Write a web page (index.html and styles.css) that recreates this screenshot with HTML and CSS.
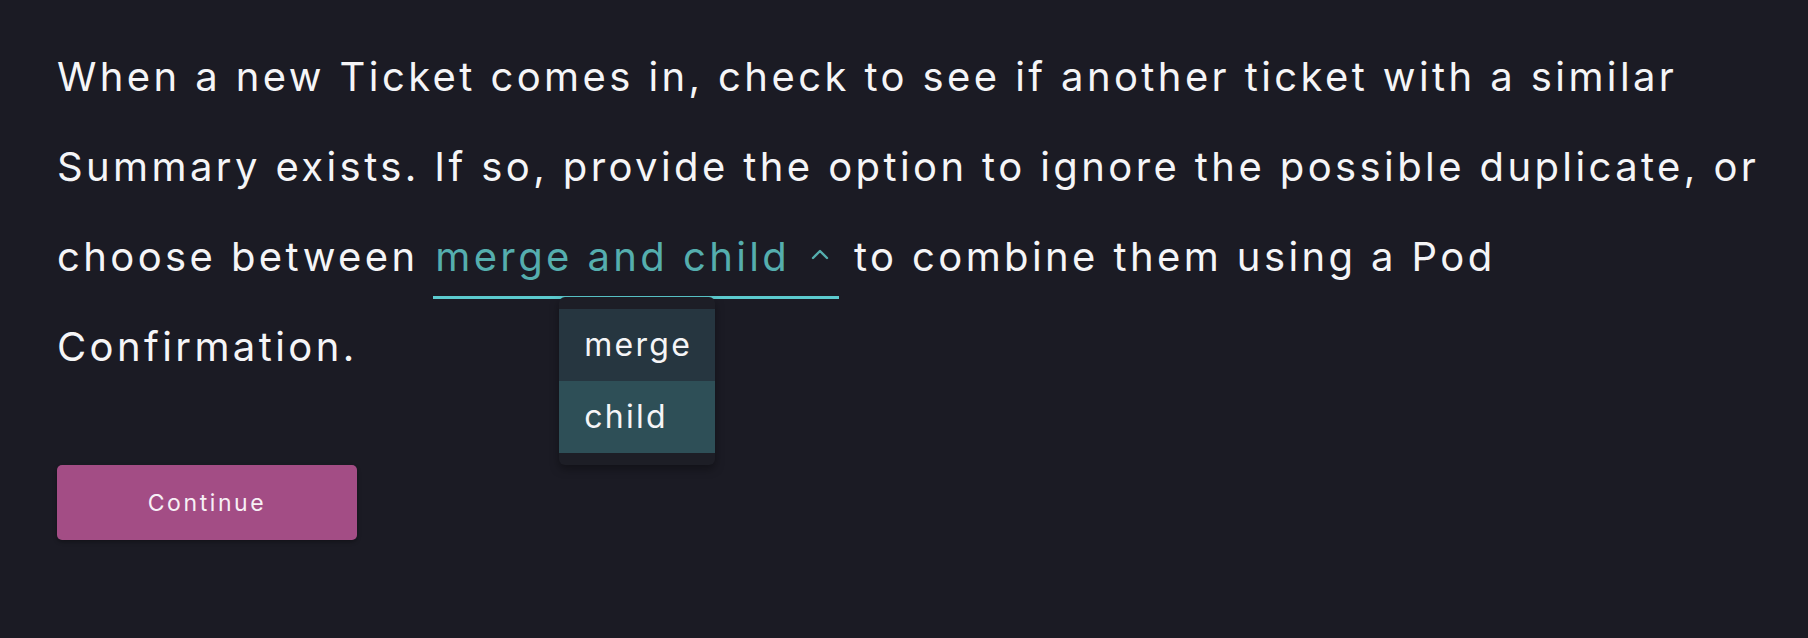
FILE: index.html
```html
<!DOCTYPE html>
<html lang="en">
<head>
<meta charset="utf-8">
<title>Duplicate ticket prompt</title>
<link rel="stylesheet" href="styles.css">
</head>
<body>
<main class="page">
  <p class="prompt">When a new Ticket comes in, check to see if another ticket with a similar Summary exists. If so, provide the option to ignore the possible duplicate, or choose between <span class="select"><span class="select-value">merge and child</span><svg class="caret" width="18" height="11" viewBox="0 0 18 11"><path d="M2 9 L9 2 L16 9" fill="none" stroke="currentColor" stroke-width="2.4" stroke-linecap="round" stroke-linejoin="round"/></svg><span class="menu"><span class="menu-item">merge</span><span class="menu-item menu-item-hover">child</span></span></span> to combine them using a Pod Confirmation.</p>
  <button class="btn-continue" type="button">Continue</button>
</main>
</body>
</html>
```

FILE: styles.css
```css
* { box-sizing: border-box; }
html, body {
  margin: 0;
  background: #1b1b24;
}
body {
  font-family: Inter, "Open Sans", sans-serif;
  color: #f5f5f7;
}
.page {
  padding: 32px 30px 32px 57px;
  display: flex;
  flex-direction: column;
  align-items: flex-start;
}
.prompt {
  margin: 0;
  max-width: 1716px;
  font-size: 40px;
  font-weight: 400;
  line-height: 90px;
  letter-spacing: 3.4px;
}
.select {
  position: relative;
  display: inline-block;
  line-height: 40px;
  color: #55aeae;
  padding: 0 10px 19px 2px;
  border-bottom: 3px solid #5ccbcf;
}
.caret {
  margin-left: 21px;
  vertical-align: 11px;
  color: #55aeae;
}
.menu {
  position: absolute;
  left: 126px;
  top: calc(100% + 1px);
  width: 156px;
  padding: 12px 0;
  background: #1d1e26;
  border-radius: 6px;
  box-shadow: 0 4px 10px rgba(0, 0, 0, 0.35);
  display: flex;
  flex-direction: column;
  z-index: 2;
  letter-spacing: 2.3px;
}
.menu-item {
  display: block;
  height: 72px;
  line-height: 72px;
  padding: 0 25px;
  font-size: 32px;
  color: #f5f5f7;
  background: #263640;
}
.menu-item-hover {
  background: #2e4f57;
}
.btn-continue {
  margin-top: 73px;
  width: 300px;
  height: 75px;
  border: 0;
  border-radius: 5px;
  background: #a34d85;
  color: #f7f0f5;
  font-family: Inter, "Open Sans", sans-serif;
  font-size: 23px;
  letter-spacing: 2.6px;
  box-shadow: 0 2px 4px rgba(0, 0, 0, 0.3);
  cursor: pointer;
}
```
